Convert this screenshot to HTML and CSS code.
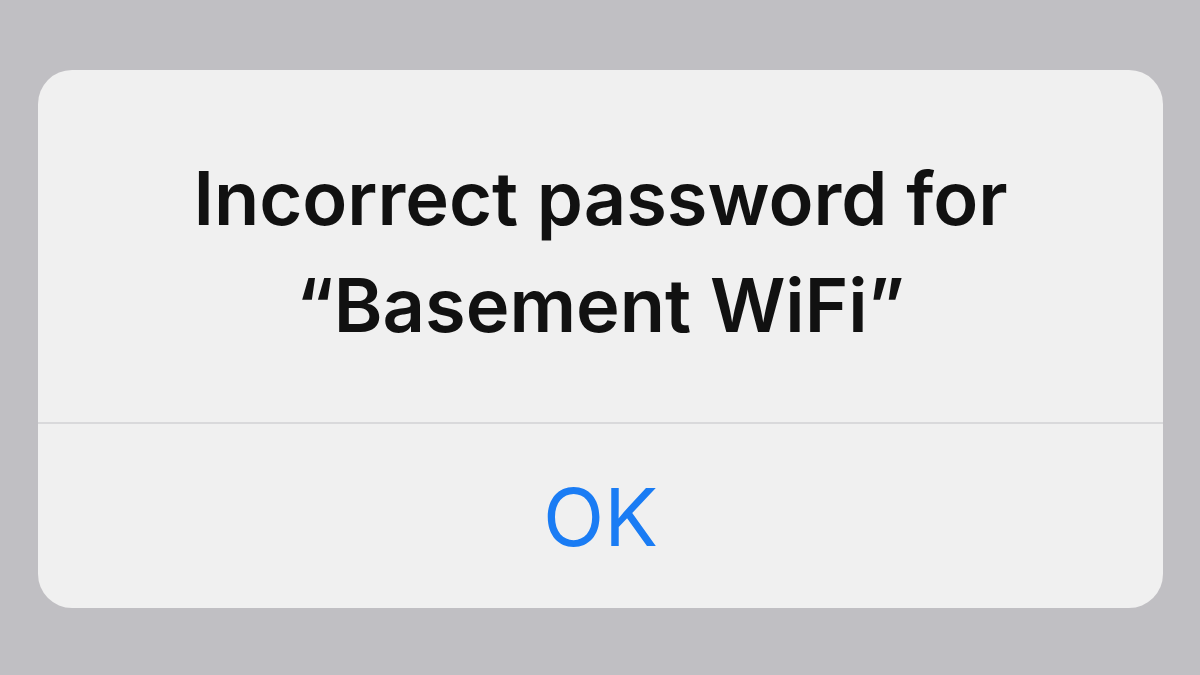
FILE: index.html
```html
<!DOCTYPE html>
<html lang="en">
<head>
<meta charset="utf-8">
<title>Incorrect password</title>
<link rel="stylesheet" href="styles.css">
</head>
<body>
<div class="screen">
  <div class="alert">
    <div class="alert-body">
      <p class="alert-title">Incorrect password for<br>“Basement WiFi”</p>
    </div>
    <div class="alert-actions">
      <span class="alert-button">OK</span>
    </div>
  </div>
</div>
</body>
</html>
```
FILE: styles.css
```css
html, body {
  margin: 0;
  padding: 0;
  background: #c0bfc3;
}
.screen {
  width: 1200px;
  height: 675px;
  padding: 70px 37px 0 38px;
  box-sizing: border-box;
}
.alert {
  height: 538px;
  background: #f0f0f0;
  border-radius: 34px;
  display: flex;
  flex-direction: column;
  overflow: hidden;
  font-family: Inter, "Liberation Sans", sans-serif;
}
.alert-body {
  height: 354px;
  padding-top: 12px;
  display: flex;
  align-items: center;
  justify-content: center;
  border-bottom: 2px solid #d9d9db;
  box-sizing: border-box;
}
.alert-title {
  margin: 0;
  text-align: center;
  color: #111111;
  font-size: 74px;
  font-weight: 600;
  letter-spacing: 0;
  line-height: 107px;
}
.alert-actions {
  flex: 1;
  display: flex;
  align-items: center;
  justify-content: center;
}
.alert-button {
  color: #1a7cf4;
  font-size: 80px;
  font-weight: 400;
}
```
